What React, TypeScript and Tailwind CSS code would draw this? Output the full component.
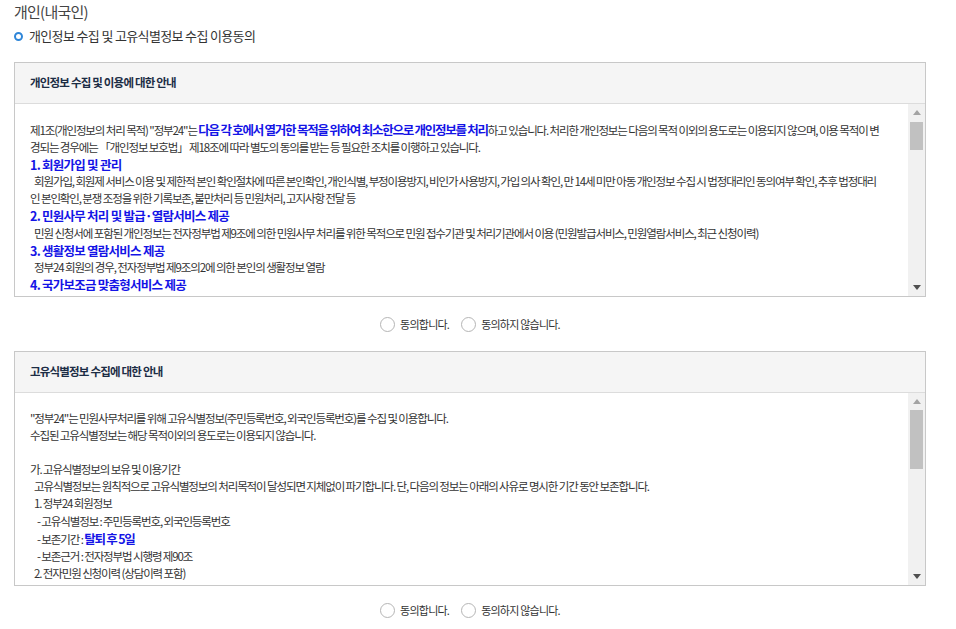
import React from "react";

type Seg = { t: string; b?: boolean };
type Line = { segs: Seg[]; head?: boolean; indent?: number };

const font = { fontFamily: '"Noto Sans CJK KR", "Noto Sans", sans-serif' };

const L = (t: string, indent = 0): Line => ({ segs: [{ t }], indent });
const H = (t: string): Line => ({ segs: [{ t }], head: true });

const privacyLines: Line[] = [
    {
        segs: [
            { t: '제1조(개인정보의 처리 목적) "정부24"는 ' },
            { t: "다음 각 호에서 열거한 목적을 위하여 최소한으로 개인정보를 처리", b: true },
            { t: "하고 있습니다. 처리한 개인정보는 다음의 목적 이외의 용도로는 이용되지 않으며, 이용 목적이 변" },
        ],
    },
    L("경되는 경우에는 「개인정보 보호법」 제18조에 따라 별도의 동의를 받는 등 필요한 조치를 이행하고 있습니다."),
    H("1. 회원가입 및 관리"),
    L("회원가입, 회원제 서비스 이용 및 제한적 본인 확인절차에 따른 본인확인, 개인식별, 부정이용방지, 비인가 사용방지, 가입 의사 확인, 만 14세 미만 아동 개인정보 수집 시 법정대리인 동의여부 확인, 추후 법정대리", 4),
    L("인 본인확인, 분쟁 조정을 위한 기록보존, 불만처리 등 민원처리, 고지사항 전달 등"),
    H("2. 민원사무 처리 및 발급·열람서비스 제공"),
    L("민원 신청서에 포함된 개인정보는 전자정부법 제9조에 의한 민원사무 처리를 위한 목적으로 민원 접수기관 및 처리기관에서 이용 (민원발급서비스, 민원열람서비스, 최근 신청이력)", 4),
    H("3. 생활정보 열람서비스 제공"),
    L("정부24 회원의 경우, 전자정부법 제9조의2에 의한 본인의 생활정보 열람", 4),
    H("4. 국가보조금 맞춤형서비스 제공"),
];

const uniqueLines: Line[] = [
    L('"정부24"는 민원사무처리를 위해 고유식별정보(주민등록번호, 외국인등록번호)를 수집 및 이용합니다.'),
    L("수집된 고유식별정보는 해당 목적이외의 용도로는 이용되지 않습니다."),
    L("\u00a0"),
    L("가. 고유식별정보의 보유 및 이용기간"),
    L("고유식별정보는 원칙적으로 고유식별정보의 처리목적이 달성되면 지체없이 파기합니다. 단, 다음의 정보는 아래의 사유로 명시한 기간 동안 보존합니다.", 4),
    L("1. 정부24 회원정보", 4),
    L("- 고유식별정보 : 주민등록번호, 외국인등록번호", 7),
    { segs: [{ t: "- 보존기간 : " }, { t: "탈퇴 후 5일", b: true }], indent: 7 },
    L("- 보존근거 : 전자정부법 시행령 제90조", 7),
    L("2. 전자민원 신청이력 (상담이력 포함)", 4),
    L("- 고유식별정보 : 주민등록번호, 외국인등록번호", 7),
];

const Radio = ({ label }: { label: string }) => (
    <label className="flex items-center gap-[5px] cursor-pointer">
        <span className="w-[15px] h-[15px] rounded-full border border-[#b5b5b5] bg-white" />
        <span className="text-[11px] text-[#333] tracking-[-0.07em]">{label}</span>
    </label>
);

const FakeScrollbar = ({ thumbTop, thumbH }: { thumbTop: number; thumbH: number }) => (
    <div className="w-[17px] shrink-0 bg-[#f1f1f1] flex flex-col items-center">
        <div className="h-[17px] flex items-center justify-center">
            <svg width="8" height="5" viewBox="0 0 8 5"><path d="M4 0L8 5H0z" fill="#a3a3a3" /></svg>
        </div>
        <div className="flex-1 w-full px-[2px]">
            <div className="w-full bg-[#c1c1c1]" style={{ marginTop: thumbTop, height: thumbH }} />
        </div>
        <div className="h-[17px] flex items-center justify-center">
            <svg width="8" height="5" viewBox="0 0 8 5"><path d="M0 0H8L4 5z" fill="#505050" /></svg>
        </div>
    </div>
);

const AgreeBox = ({ title, lines, thumbTop, thumbH }: { title: string; lines: Line[]; thumbTop: number; thumbH: number }) => (
    <div className="border border-[#c8c8c8]">
        <div className="h-[41px] bg-[#f5f5f5] border-b border-[#dcdcdc] flex items-center px-[15px]">
            <span className="text-[11.5px] font-bold text-[#1c2d45] tracking-[-0.07em]">{title}</span>
        </div>
        <div className="flex h-[192px]">
            <div className="flex-1 overflow-hidden pt-[17px] pl-[15px] text-[11.5px] leading-[17.1px] text-[#333] tracking-[-0.097em]">
                { lines.map( ( line, i ) => (
                    <div
                        key={ i }
                        className={ `whitespace-nowrap ${line.head ? "text-[12.5px] font-bold text-[#1414e6] tracking-[-0.06em]" : ""}` }
                        style={{ paddingLeft: line.indent ?? 0 }}
                    >
                        { line.segs.map( ( s, j ) => (
                            <span key={ j } className={ s.b ? "font-bold text-[#1414e6] text-[12.5px] tracking-[-0.1em]" : "" }>{ s.t }</span>
                        ) ) }
                    </div>
                ) ) }
            </div>
            <FakeScrollbar thumbTop={ thumbTop } thumbH={ thumbH } />
        </div>
    </div>
);

export default function App() {
    return (
        <div className="w-[956px] h-[629px] bg-white overflow-hidden pl-[14px] pr-[30px]" style={ font }>
            <div className="pt-[2px] text-[15px] leading-[20px] text-[#444] tracking-[-0.05em]">개인(내국인)</div>
            <div className="mt-[5px] flex items-center gap-[6px] h-[18px]">
                <span className="w-[9px] h-[9px] rounded-full border-[2.5px] border-[#2f86d8]" />
                <span className="text-[13px] text-[#333] tracking-[-0.05em]">개인정보 수집 및 고유식별정보 수집 이용동의</span>
            </div>

            <div className="mt-[17px]">
                <AgreeBox title="개인정보 수집 및 이용에 대한 안내" lines={ privacyLines } thumbTop={ 1 } thumbH={ 28 } />
            </div>
            <div className="h-[54px] flex items-center justify-center gap-[12px]">
                <Radio label="동의합니다." />
                <Radio label="동의하지 않습니다." />
            </div>

            <AgreeBox title="고유식별정보 수집에 대한 안내" lines={ uniqueLines } thumbTop={ 0 } thumbH={ 59 } />
            <div className="h-[48px] flex items-center justify-center gap-[12px] pt-[1px]">
                <Radio label="동의합니다." />
                <Radio label="동의하지 않습니다." />
            </div>
        </div>
    );
}
